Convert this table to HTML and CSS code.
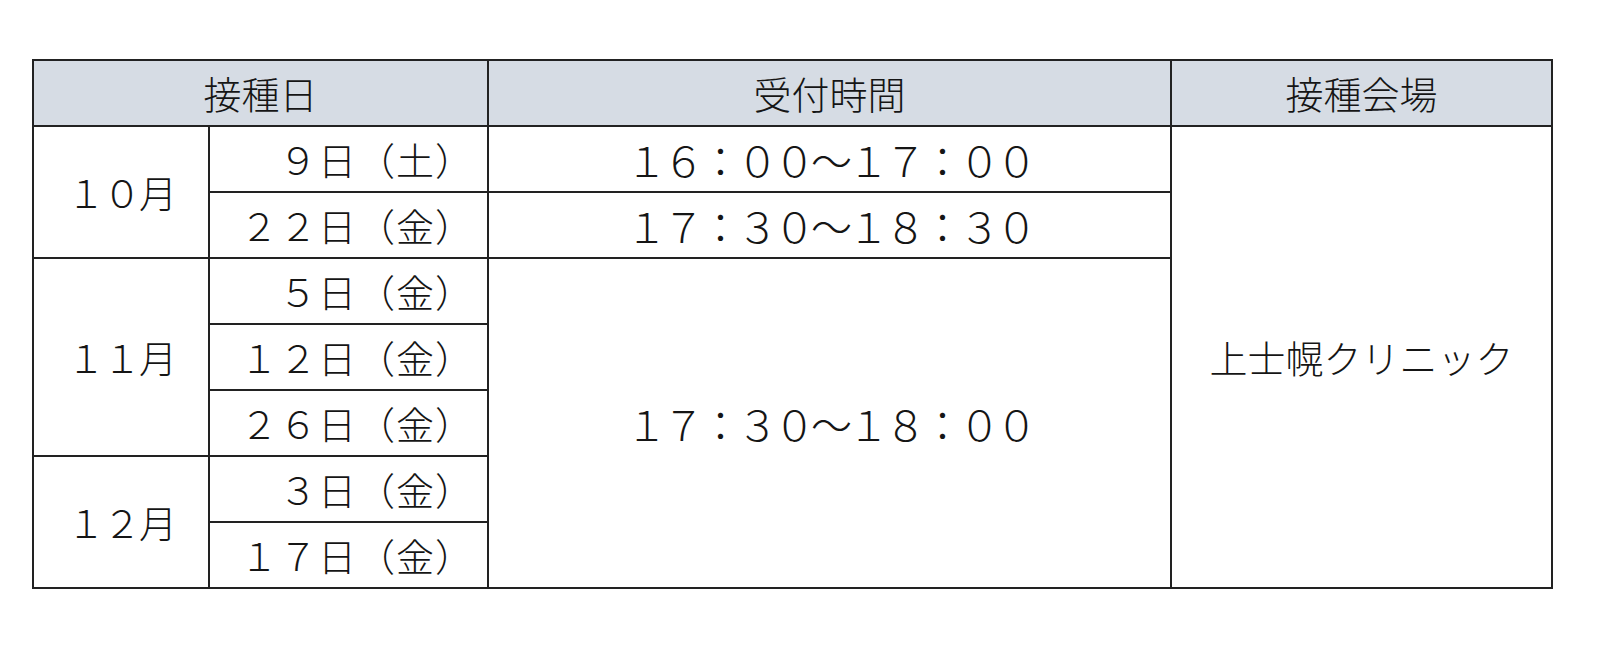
FILE: index.html
```html
<!DOCTYPE html>
<html lang="ja">
<head>
<meta charset="utf-8">
<link rel="stylesheet" href="styles.css">
</head>
<body>
<div class="wrap">
<table class="sched">
  <colgroup>
    <col class="c-month"><col class="c-day"><col class="c-time"><col class="c-place">
  </colgroup>
  <thead>
    <tr><th colspan="2">接種日</th><th>受付時間</th><th>接種会場</th></tr>
  </thead>
  <tbody>
    <tr><td rowspan="2" class="month">１０月</td><td class="day">９日（土）</td><td class="time">１６：００～１７：００</td><td rowspan="7" class="place">上士幌クリニック</td></tr>
    <tr><td class="day">２２日（金）</td><td class="time">１７：３０～１８：３０</td></tr>
    <tr><td rowspan="3" class="month">１１月</td><td class="day">５日（金）</td><td rowspan="5" class="time">１７：３０～１８：００</td></tr>
    <tr><td class="day">１２日（金）</td></tr>
    <tr><td class="day">２６日（金）</td></tr>
    <tr><td rowspan="2" class="month">１２月</td><td class="day">３日（金）</td></tr>
    <tr><td class="day">１７日（金）</td></tr>
  </tbody>
</table>
</div>
</body>
</html>
```
FILE: styles.css
```css
html, body { margin: 0; padding: 0; background: #fff; }
.wrap { padding: 59px 0 0 32px; }
.sched {
  border-collapse: collapse;
  font-family: "Noto Sans CJK JP", "Noto Sans", sans-serif;
  font-size: 38px;
  font-weight: 300;
  color: #151515;
  table-layout: fixed;
}
.c-month { width: 176px; }
.c-day { width: 279px; }
.c-time { width: 683px; }
.c-place { width: 381px; }
.sched th, .sched td {
  border: 2px solid #222;
  padding: 0;
  height: 64px;
  text-align: center;
  vertical-align: middle;
  font-weight: 300;
  line-height: 1;
}
.sched th { background: #d6dce4; }
.month { letter-spacing: -2px; padding-right: 8px; }
.sched td.day { letter-spacing: 1px; text-align: right; padding-right: 13px; }
.time { font-size: 41px; letter-spacing: -4px; }
```
